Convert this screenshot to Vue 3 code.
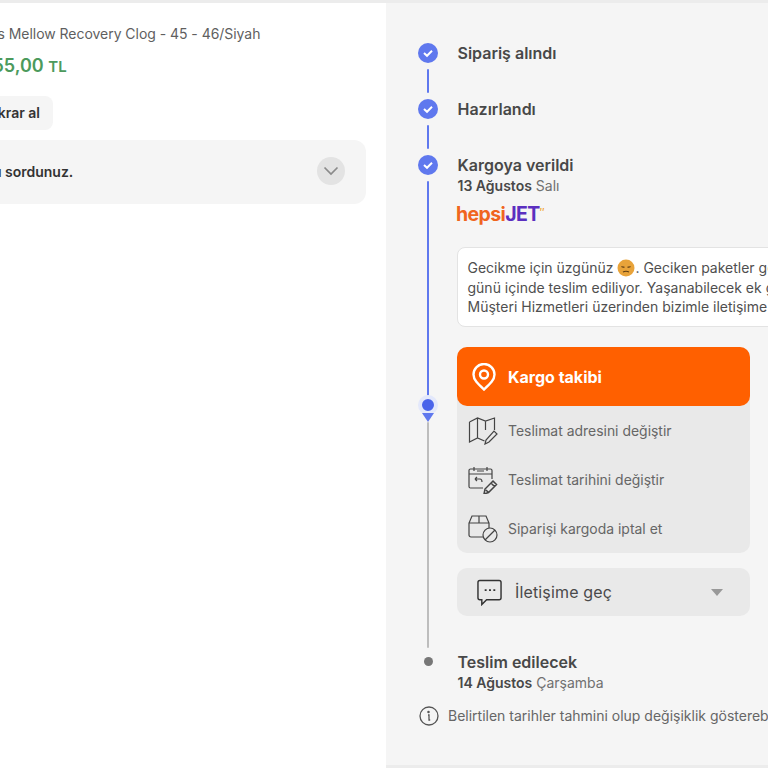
<script setup>
const steps = [
  { title: 'Sipariş alındı' },
  { title: 'Hazırlandı' },
]
</script>

<template>
  <div class="page">
    <section class="left">
      <p class="product">Crocs Mellow Recovery Clog - 45 - 46/Siyah</p>
      <p class="price">1.555,00 <small>TL</small></p>
      <button class="again">Tekrar al</button>
      <div class="question">
        <span>Bu ürünle ilgili bir soru sordunuz.</span>
        <i class="chev">
          <svg width="16" height="10" viewBox="0 0 16 10"><path d="M1.5 1.5 8 8l6.5-6.5" fill="none" stroke="#8a8a8a" stroke-width="1.7"/></svg>
        </i>
      </div>
    </section>

    <section class="right">
      <div class="step" v-for="s in steps" :key="s.title">
        <div class="rail">
          <svg class="tick" width="20" height="20" viewBox="0 0 20 20"><circle cx="10" cy="10" r="10" fill="#5f78ee"/><path d="m6 10 3 2.800 5-5" fill="none" stroke="#fff" stroke-width="2"/></svg>
          <b class="line"></b>
        </div>
        <h3>{{ s.title }}</h3>
      </div>

      <div class="step shipped">
        <div class="rail long">
          <svg class="tick" width="20" height="20" viewBox="0 0 20 20"><circle cx="10" cy="10" r="10" fill="#5f78ee"/><path d="m6 10 3 2.800 5-5" fill="none" stroke="#fff" stroke-width="2"/></svg>
          <b class="line blue"></b>
          <i class="now"></i>
          <i class="arrow"></i>
          <b class="line grey"></b>
        </div>
        <div class="body">
          <h3>Kargoya verildi</h3>
          <p class="date"><strong>13 Ağustos</strong> Salı</p>
          <div class="logo"><span class="he">hepsi</span><span class="jet">JET</span><span class="mark">″</span></div>
          <div class="msg">
            Gecikme için üzgünüz
            <svg class="emoji" width="18" height="18" viewBox="0 0 18 18">
              <circle cx="9" cy="9" r="8.500" fill="#e8a33a"/>
              <path d="M4.500 7.500q1.500 1 3 .5M10.500 8q1.500.5 3-.5" fill="none" stroke="#5e3d14" stroke-width="1.200"/>
              <path d="M6 13q3-1.500 6 0" fill="none" stroke="#5e3d14" stroke-width="1.200"/>
            </svg>. Geciken paketler genellikle 1 iş<br>
            günü içinde teslim ediliyor. Yaşanabilecek ek gecikmelerde<br>
            Müşteri Hizmetleri üzerinden bizimle iletişime geçebilirsiniz.
          </div>
          <div class="actions">
            <a class="track">
              <svg width="24" height="28" viewBox="0 0 24 28" fill="none" stroke="#fff" stroke-width="2.400">
                <path d="M12 26.500C6 21 1.500 17 1.500 11.500a10.500 10.500 0 0 1 21 0C22.500 17 18 21 12 26.500Z"/>
                <circle cx="12" cy="11.500" r="4"/>
              </svg>
              <span>Kargo takibi</span>
            </a>
            <div class="act">
              <svg width="30" height="28" viewBox="0 0 30 28" fill="none" stroke="#444" stroke-width="1.200">
                <path d="M1.500 5l8-4 8 3 9-3v12M1.500 5v20l8-4 7 3M9.500 1v20M17.500 4v9"/>
                <path d="M17 27l1-4 8-9 3 3-8 8-4 2Z"/>
              </svg>
              <span>Teslimat adresini değiştir</span>
            </div>
            <div class="act">
              <svg width="30" height="28" viewBox="0 0 30 28" fill="none" stroke="#444" stroke-width="1.200">
                <path d="M15 22H2.500a1.500 1.500 0 0 1-1.500-1.500v-16A1.500 1.500 0 0 1 2.500 3h20A1.500 1.500 0 0 1 24 4.500V13"/>
                <path d="M1 8h23M6 1v4M19 1v4M9 5h7"/>
                <path d="M7 13l2-2M7 13l2 2M7 13h5c1.500 0 2 1 2 3"/>
                <path d="M16 28l1-5 8-8 3.500 3.500-8 8-4.500 1.500ZM23 17l3.500 3.500M18 24l2.500 2.500" stroke-width="1.500"/>
              </svg>
              <span>Teslimat tarihini değiştir</span>
            </div>
            <div class="act">
              <svg width="30" height="29" viewBox="0 0 30 29" fill="none" stroke="#444" stroke-width="1.200">
                <path d="M15 23H3a2 2 0 0 1-2-2V9l3-7h14l3 7v5M1 9h20M11 2v7"/>
                <circle cx="22" cy="21" r="7"/>
                <path d="m17 26 10-10"/>
              </svg>
              <span>Siparişi kargoda iptal et</span>
            </div>
          </div>
          <div class="contact">
            <svg width="25" height="27" viewBox="0 0 26 27" fill="none" stroke="#333" stroke-width="1.500">
              <path d="M3 1h20a2 2 0 0 1 2 2v16a2 2 0 0 1-2 2H10l-5 5v-5H3a2 2 0 0 1-2-2V3a2 2 0 0 1 2-2Z"/>
              <path d="M8 11h2M12.500 11h2M17 11h2" stroke-width="2"/>
            </svg>
            <span>İletişime geç</span>
            <i class="caret"></i>
          </div>
        </div>
      </div>

      <div class="step last">
        <div class="rail"><i class="todo"></i></div>
        <div class="body">
          <h3>Teslim edilecek</h3>
          <p class="date"><strong>14 Ağustos</strong> Çarşamba</p>
        </div>
      </div>

      <p class="note">
        <svg width="20" height="20" viewBox="0 0 20 20" fill="none" stroke="#555" stroke-width="1.300">
          <circle cx="10" cy="10" r="9"/>
          <circle cx="9.500" cy="6" r=".6" fill="#555"/>
          <path d="M9 9h1v5h1.200"/>
        </svg>
        Belirtilen tarihler tahmini olup değişiklik gösterebilir.
      </p>
    </section>
  </div>
</template>

<style>
html, body { margin: 0; background: #fff; }
</style>

<style scoped>
.page {
  width: 768px;
  height: 768px;
  display: flex;
  overflow: hidden;
  box-sizing: border-box;
  border-top: 3px solid #ececec;
  font-family: Inter, "Liberation Sans", sans-serif;
  color: #484848;
}
p, h3 { margin: 0; }

.left { width: 386px; flex: none; overflow: hidden; }
.product { margin: 22px 0 0 -34px; font-size: 14px; line-height: 18px; color: #5f5f5f; white-space: nowrap; letter-spacing: -0.040px; }
.price { margin: 11px 0 0 -32px; font-size: 18px; line-height: 24px; font-weight: 600; color: #4c9a5c; white-space: nowrap; }
.price small { font-size: 15px; font-weight: 600; }
.again {
  display: block; margin: 17px 0 0 -40px; width: 93px; height: 34px; border: 0; border-radius: 8px;
  background: #f5f5f5; font: 600 14px/34px Inter, sans-serif; color: #333; padding: 0 13px 0 0; text-align: right;
}
.question {
  margin: 10px 0 0 -100px; width: 466px; height: 64px; box-sizing: border-box; padding: 0 21px 0 0;
  background: #f5f5f5; border-radius: 12px; display: flex; align-items: center; justify-content: space-between;
  font-size: 14px; font-weight: 600; color: #333; white-space: nowrap;
}
.question span { margin: -2px 0 0 -49px; }
.chev { width: 28px; height: 28px; margin-top: -2px; border-radius: 50%; background: #e3e3e3; display: flex; align-items: center; justify-content: center; }

.right {
  flex: 1; min-width: 0; height: 765px; overflow: hidden; background: #f5f5f5; border-bottom: 3px solid #ececec; padding: 40px 0 0 32px; box-sizing: border-box; white-space: nowrap;
}
.step { display: flex; height: 56px; }
.rail { width: 20px; flex: none; display: flex; flex-direction: column; align-items: center; margin-right: 20px; }
.tick { flex: none; }
.line { width: 2.500px; flex: none; height: 24px; margin: 6px 0; background: #5f78ee; border-radius: 1px; }
.step h3 { font-size: 16px; line-height: 20px; font-weight: 600; color: #484848; margin-left: -0.500px; }

.shipped { height: 500px; }
.line.blue { height: 215px; margin: 6px 0 0; }
.now { flex: none; width: 12px; height: 12px; border-radius: 50%; background: #4a64ea; border: 4px solid #e3e8fb; box-sizing: content-box; margin-top: -1px; }
.arrow { flex: none; width: 0; height: 0; border: 6px solid transparent; border-top: 9px solid #5f78ee; border-bottom: 0; margin-top: -2px; }
.line.grey { height: 226px; margin: 0; background: #bdbdbd; }

.body { width: 340px; flex: none; }
.date { font-size: 14px; line-height: 20px; color: #707070; margin-top: 1px; margin-left: -0.500px; }
.date strong { font-weight: 600; color: #484848; }
.logo { margin: 5px 0 0 -2px; height: 22px; font-size: 19.500px; line-height: 22px; font-weight: 700; letter-spacing: -0.600px; }
.he { color: #f0651e; }
.jet { color: #5b2fc0; }
.mark { color: #f0a020; font-size: 11px; vertical-align: 5px; font-weight: 400; }

.msg {
  margin: 24px 0 0 -1.500px; width: 360px; height: 80px; box-sizing: border-box; padding: 10px;
  background: #fff; border: 1px solid #e3e3e3; border-radius: 8px; font-size: 14px; line-height: 19.500px; color: #4f4f4f;
}
.emoji { vertical-align: -4px; }
.actions { margin: 20px 0 0 -1.500px; width: 293.500px; background: #e9e9e9; border-radius: 10px; }
.track {
  height: 59px; display: flex; align-items: center; padding-left: 15.500px; gap: 12px; background: #ff6000; border-radius: 10px;
  color: #fff; font-size: 16px; font-weight: 700;
}
.act { height: 49px; display: flex; align-items: center; padding-left: 11.500px; gap: 10px; font-size: 13.950px; color: #666; }
.contact {
  margin: 15px 0 0 -1.500px; width: 293.500px; height: 48px; box-sizing: border-box; background: #e9e9e9; border-radius: 10px;
  display: flex; align-items: center; padding: 0 27px 0 20.500px; font-size: 16px; letter-spacing: 0.150px; color: #4a4a4a;
}
.contact span { margin-left: 13px; flex: 1; }
.caret { width: 0; height: 0; border: 6.500px solid transparent; border-top: 7px solid #999; border-bottom: 0; }

.last { height: 54px; }
.todo { width: 9px; height: 9px; margin-top: 2px; border-radius: 50%; background: #777; }
.last h3 { margin-top: -3px; }
.note { display: flex; align-items: center; gap: 9px; margin: -3px 0 0 1px; font-size: 14px; line-height: 20px; color: #666; }
.note svg { flex: none; }
</style>
